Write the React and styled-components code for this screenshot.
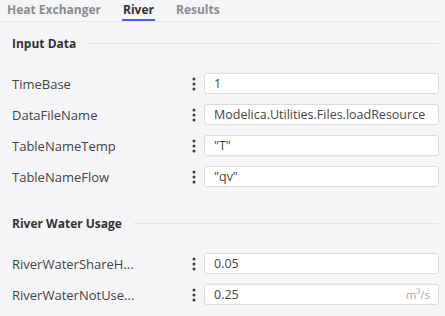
import styled, { createGlobalStyle } from "styled-components";

const GlobalStyle = createGlobalStyle`
  html, body { margin: 0; padding: 0; background: #f5f5f7; }
  body { font-family: "Open Sans", "Liberation Sans", sans-serif; }
`;

const tabs = ["Heat Exchanger", "River", "Results"];

const sections = [
  {
    title: "Input Data",
    rows: [
      { label: "TimeBase", value: "1" },
      { label: "DataFileName", value: "Modelica.Utilities.Files.loadResource" },
      { label: "TableNameTemp", value: "\"T\"" },
      { label: "TableNameFlow", value: "\"qv\"" },
    ],
  },
  {
    title: "River Water Usage",
    rows: [
      { label: "RiverWaterShareH...", value: "0.05" },
      { label: "RiverWaterNotUse...", value: "0.25", unit: "m³/s" },
    ],
  },
];

const Dots = () => (
  <svg width="4" height="14" viewBox="0 0 4 14">
    <circle cx="2" cy="2" r="1.5" fill="#3d3d3d" />
    <circle cx="2" cy="7" r="1.5" fill="#3d3d3d" />
    <circle cx="2" cy="12" r="1.5" fill="#3d3d3d" />
  </svg>
);

const App = () => {
  return (
    <Page>
      <GlobalStyle />
      <TabBar>
        {tabs.map((t) => (
          <Tab key={t} $active={t === "River"}>{t}</Tab>
        ))}
      </TabBar>
      {sections.map((s) => (
        <Section key={s.title}>
          <SectionHead>
            <span>{s.title}</span>
            <Rule />
          </SectionHead>
          <Rows>
            {s.rows.map((r) => (
              <Row key={r.label}>
                <Label>{r.label}</Label>
                <Handle><Dots /></Handle>
                <Field>
                  <span>{r.value}</span>
                  {r.unit && <Unit>{r.unit}</Unit>}
                </Field>
              </Row>
            ))}
          </Rows>
        </Section>
      ))}
    </Page>
  );
};

export default App;

const Page = styled.div`
  width: 445px;
  height: 316px;
  overflow: hidden;
  padding: 0 6px 0 0;
  box-sizing: border-box;
  color: #3a3a3a;
`;

const TabBar = styled.div`
  display: flex;
  gap: 20px;
  padding-left: 6px;
  height: 21px;
  border-bottom: 1px solid #e6e6e9;
`;

const Tab = styled.div`
  font-size: 12px;
  font-weight: 700;
  color: ${(p) => (p.$active ? "#333" : "#8b8b8f")};
  line-height: 19px;
  height: 19px;
  border-bottom: 2px solid ${(p) => (p.$active ? "#4961d6" : "transparent")};
  padding: 0 1px;
`;

const Section = styled.div`
  padding-left: 12px;
`;

const SectionHead = styled.div`
  display: flex;
  align-items: center;
  gap: 12px;
  height: 18px;
  margin-top: 12px;
  font-size: 12px;
  font-weight: 700;
  color: #333;
`;

const Rule = styled.div`
  flex: 1;
  height: 1px;
  background: #e4e4e7;
`;

const Rows = styled.div`
  display: flex;
  flex-direction: column;
  gap: 10px;
  margin-top: 21px;
  margin-bottom: 27px;
`;

const Row = styled.div`
  display: grid;
  grid-template-columns: 180px 12px 1fr;
  align-items: center;
  height: 21px;
`;

const Label = styled.div`
  font-size: 13px;
  color: #444;
  white-space: nowrap;
`;

const Handle = styled.div`
  display: flex;
  align-items: center;
`;

const Field = styled.div`
  display: flex;
  align-items: center;
  justify-content: space-between;
  height: 21px;
  box-sizing: border-box;
  border: 1px solid #dcdcdf;
  border-radius: 3px;
  background: #fff;
  padding: 0 8px 0 9px;
  font-size: 12.5px;
  color: #444;
  white-space: nowrap;
  overflow: hidden;
`;

const Unit = styled.span`
  color: #a8a8ac;
  font-size: 11.5px;
`;
